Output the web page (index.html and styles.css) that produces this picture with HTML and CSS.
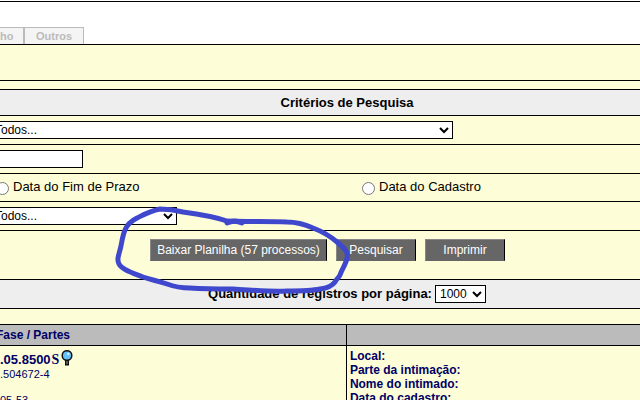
FILE: index.html
```html
<!DOCTYPE html>
<html lang="pt-BR">
<head>
<meta charset="utf-8">
<title>Critérios de Pesquisa</title>
<link rel="stylesheet" href="styles.css">
</head>
<body>
<header class="top">
  <nav class="tabs">
    <a class="tab tab-first" href="#">ho</a>
    <a class="tab" href="#">Outros</a>
  </nav>
</header>
<main>
  <div class="row row-message"></div>
  <div class="row row-gap"></div>
  <form>
    <h1 class="row row-title">Critérios de Pesquisa</h1>
    <div class="row"><select class="field wide" aria-label="Classe"><option>Todos...</option></select></div>
    <div class="row"><input class="field text" type="text" aria-label="Número"></div>
    <div class="row row-dates">
      <label class="choice"><input type="radio" name="data"><span>Data do Fim de Prazo</span></label>
      <label class="choice"><input type="radio" name="data"><span>Data do Cadastro</span></label>
    </div>
    <div class="row"><select class="field narrow" aria-label="Tipo"><option>Todos...</option></select></div>
    <div class="row row-actions">
      <button class="button download" type="button">Baixar Planilha (57 processos)</button>
      <button class="button" type="button">Pesquisar</button>
      <button class="button" type="button">Imprimir</button>
    </div>
    <div class="row row-count">
      <label for="count">Quantidade de registros por página:</label>
      <select class="field count" id="count"><option>1000</option></select>
    </div>
  </form>
  <div class="row row-space"></div>
  <table class="results">
    <thead>
      <tr><th class="case">Fase / Partes</th><th></th></tr>
    </thead>
    <tbody>
      <tr>
        <td class="case">
          <div class="number"><a href="#">.05.8500</a><span class="flag">S</span><svg class="lens" viewBox="0 0 12 16" aria-hidden="true"><path d="M4 10h4v5.500H4z" fill="#111"/><path d="M6 11v3" stroke="#999" stroke-width="1"/><circle cx="6" cy="5.500" r="4.800" fill="#62c4fa" stroke="#111" stroke-width="1.500"/><circle cx="7.300" cy="4" r="1.200" fill="#d5f2ff"/></svg></div>
          <div class="old">.504672-4</div>
          <div class="code">05-53</div>
        </td>
        <td class="info">
          <div>Local:</div>
          <div>Parte da intimação:</div>
          <div>Nome do intimado:</div>
          <div>Data do cadastro:</div>
        </td>
      </tr>
    </tbody>
  </table>
</main>
<svg class="mark" viewBox="0 0 240 100" aria-hidden="true">
  <path d="M127 21C112 16 98 14 83 12C75 10 68 9 60 9C50 11 43 15 37 18C31 21 27 25 25 30C22 37 22 43 20 50C18 57 17 60 19 64C22 70 33 73 43 77C52 80 58 81 67 84C75 87 82 88 90 88C105 89 119 89 133 89C152 90 169 92 187 91C200 91 211 91 220 89C228 88 232 86 235 82C237 78 238 79 240 75C242 69 246 64 247 58C249 52 243 47 237 42C230 36 221 31 213 28C204 24 196 22 187 22C168 21 150 22 127 21"/>
  <path d="M127 23c4-2 9-3 15 0"/>
</svg>
</body>
</html>
```
FILE: styles.css
```css
* { box-sizing: border-box; }

body {
  margin: 0;
  height: 100vh;
  overflow: hidden;
  position: relative;
  background: #fff;
  color: #000;
  font: 12px/14px "Liberation Sans", Arial, sans-serif;
}

main { background: #fdfdd7; }

.top {
  margin-top: 1px;
  padding-top: 25px;
  border-top: 1px solid #000;
  border-bottom: 1px solid #000;
}

.tabs { display: flex; }

.tab {
  width: 60px;
  height: 17px;
  border: 1px solid #bbb;
  border-bottom: 0;
  background: #f4f4f4;
  color: #bbb;
  font-size: 11px;
  font-weight: bold;
  line-height: 17px;
  text-align: center;
  text-decoration: none;
}

.tab-first {
  width: 24px;
  padding-right: 10px;
  border-left: 0;
  text-align: right;
}

.row {
  display: flex;
  align-items: center;
  height: 29px;
  margin: 0;
  border-bottom: 1px solid #000;
}

.row-message { height: 36px; }
.row-gap { height: 9px; }
.row-space { height: 16px; }

.row-title {
  justify-content: center;
  height: 26px;
  padding-left: 54px;
  background: #eee;
  font-size: 13px;
}

.field {
  height: 18px;
  margin: 0 0 0 -10px;
  padding: 0;
  border: 1px solid #000;
  border-radius: 0;
  background-color: #fff;
  color: #000;
  font: 12px "Liberation Sans", Arial, sans-serif;
}

.wide { width: 463px; }
.narrow { width: 187px; }
.text { width: 93px; }

.row-dates {
  height: 28px;
  font-size: 13px;
}

.choice {
  display: flex;
  align-items: flex-start;
}

.choice:first-child {
  width: 366px;
  margin-left: -4px;
}

.choice input {
  width: 13px;
  height: 13px;
  margin: 2px 4px 0 0;
}

.row-actions {
  align-items: flex-start;
  gap: 9px;
  height: 49px;
  padding: 8px 0 0 150px;
}

.button {
  width: 80px;
  height: 22px;
  padding: 0;
  border: 1px solid;
  border-color: #888 #000 #666 #888;
  background: #666;
  color: #fff;
  font: 12px "Liberation Sans", Arial, sans-serif;
  white-space: nowrap;
}

.download { width: 177px; }

.row-count {
  justify-content: center;
  height: 29px;
  padding-left: 54px;
  background: #eee;
  font-size: 13px;
  font-weight: bold;
}

.count { width: 51px; margin-left: 3px; }

.results {
  width: 100%;
  border-collapse: separate;
  border-spacing: 0;
  table-layout: fixed;
  color: #000066;
}

.results th {
  height: 21px;
  padding: 0;
  border-bottom: 1px solid #000;
  background: #bbb;
  text-align: left;
}

.results .case {
  width: 54.2%;
  border-right: 1px solid #000;
}

.results th.case { text-indent: -4px; }

.results td {
  height: 70px;
  padding: 3px 0 0;
  vertical-align: top;
}

.results .info {
  padding-left: 3px;
  font-weight: bold;
}

.number {
  display: flex;
  align-items: center;
  height: 18px;
  font-size: 13px;
  font-weight: bold;
}

.number a {
  margin-top: 4px;
  color: inherit;
  text-decoration: none;
}

.flag {
  margin: 4px 0 0 1px;
  font-family: "Liberation Serif", "Times New Roman", serif;
  font-size: 14px;
}

.lens {
  width: 12px;
  height: 16px;
  margin-left: 2px;
}

.old {
  height: 26px;
  font-size: 11px;
}

.code { font-size: 11px; }

.mark {
  position: absolute;
  top: 200px;
  left: 100px;
  width: 240px;
  height: 100px;
  overflow: visible;
  fill: none;
  stroke: #3f48cc;
  stroke-width: 5;
  stroke-linecap: round;
  stroke-linejoin: round;
}
```
